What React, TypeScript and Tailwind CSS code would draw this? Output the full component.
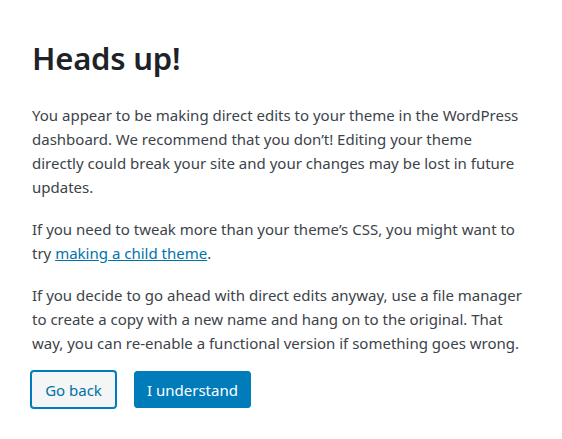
import React from "react";

export default function App() {
  return (
    <div className="w-[562px] h-[439px] bg-white px-8 pt-[38px] font-['Noto_Sans',sans-serif] text-[15px] leading-6 text-[#3c434a]">
      <h1 className="m-0 text-[31px] leading-[40px] font-semibold text-[#1d2327] tracking-[-0.2px]">Heads up!</h1>
      <div className="w-[492px]">
        <p className="mt-[25px]">
          You appear to be making direct edits to your theme in the WordPress dashboard. We recommend that you don’t! Editing your theme directly could break your site and your changes may be lost in future updates.
        </p>
        <p className="mt-[18px]">
          If you need to tweak more than your theme’s CSS, you might want to try{" "}
          <a href="#" className="text-[#0073aa] underline">making a child theme</a>.
        </p>
        <p className="mt-[18px]">
          If you decide to go ahead with direct edits anyway, use a file manager to create a copy with a new name and hang on to the original. That way, you can re-enable a functional version if something goes wrong.
        </p>
      </div>
      <div className="mt-4 -ml-px flex gap-[18px]">
        <button className="h-[37px] w-[85px] rounded-[3px] border border-[#007cba] bg-[#f3f5f6] text-[15px] text-[#0071a1] ring-1 ring-[#007cba]">
          Go back
        </button>
        <button className="h-[37px] w-[117px] rounded-[3px] border border-[#007cba] bg-[#007cba] text-[15px] text-white">
          I understand
        </button>
      </div>
    </div>
  );
}
